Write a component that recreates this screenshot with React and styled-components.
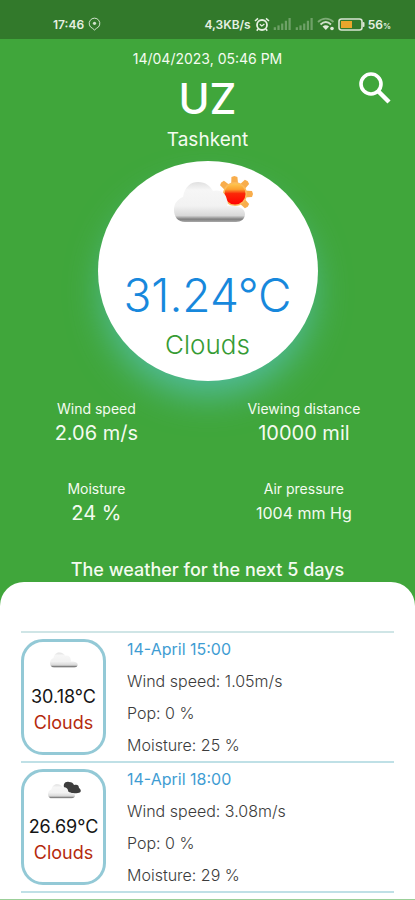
import styled, { createGlobalStyle } from "styled-components";

const GlobalStyle = createGlobalStyle`
  * {
    box-sizing: border-box;
    margin: 0;
    padding: 0;
  }
  body {
    background: #40a63b;
    font-family: Inter, "Open Sans", sans-serif;
  }
`;

const Screen = styled.div`
  min-height: 100vh;
  display: flex;
  flex-direction: column;
  border-bottom: 1px solid #9bcf98;
  background: #40a63b;
  color: #f4fbf0;
`;

const StatusBar = styled.div`
  height: 39px;
  padding: 9px 24px 0 53px;
  display: flex;
  align-items: center;
  justify-content: space-between;
  background: #32792b;
  font-size: 12px;
  font-weight: 600;
  color: #e6f0e2;
`;

const StatusGroup = styled.div`
  display: flex;
  align-items: center;
  gap: ${({ $gap }) => $gap}px;
  small {
    font-size: 8px;
  }
`;

const Header = styled.header`
  position: relative;
  padding-top: 10px;
  display: flex;
  flex-direction: column;
  align-items: center;
`;

const DateText = styled.p`
  font-size: 14px;
  line-height: 20px;
`;

const Country = styled.h1`
  font-size: 42px;
  font-weight: 500;
  line-height: 60px;
  color: white;
`;

const City = styled.p`
  font-size: 19px;
  line-height: 22px;
`;

const SearchButton = styled.button`
  position: absolute;
  top: 31px;
  right: 22px;
  width: 36px;
  height: 36px;
  border: none;
  background: none;
  cursor: pointer;
`;

const WeatherCircle = styled.section`
  width: 220px;
  height: 220px;
  margin: 10px auto 0;
  padding-top: 14px;
  display: flex;
  flex-direction: column;
  align-items: center;
  border-radius: 50%;
  background: white;
  box-shadow: 0 20px 36px -6px #52bda0;
`;

const Temperature = styled.p`
  margin-top: 40px;
  font-size: 46px;
  font-weight: 300;
  line-height: 60px;
  color: #1788dc;
`;

const Condition = styled.p`
  margin-top: 2px;
  font-size: 26px;
  font-weight: 300;
  line-height: 36px;
  color: #369b34;
`;

const Stats = styled.div`
  margin-top: 18px;
  display: flex;
  justify-content: space-around;
  text-align: center;
`;

const StatColumn = styled.dl`
  display: flex;
  flex-direction: column;
  gap: 32px;
`;

const StatLabel = styled.dt`
  font-size: 14px;
  line-height: 20px;
`;

const StatValue = styled.dd`
  font-size: ${({ $small }) => ($small ? 16 : 20)}px;
  line-height: 28px;
`;

const ForecastTitle = styled.h2`
  margin-top: 30px;
  font-size: 18px;
  font-weight: 500;
  line-height: 25px;
  text-align: center;
`;

const ForecastPanel = styled.section`
  flex: 1;
  padding: 49px 21px 0;
  border-radius: 24px 24px 0 0;
  background: white;
`;

const ForecastList = styled.ul`
  list-style: none;
  border-top: 2px solid #cfe5e6;
`;

const ForecastItem = styled.li`
  height: 130px;
  display: flex;
  align-items: flex-start;
  gap: 21px;
  padding-top: 6px;
  border-bottom: 2px solid #bfe0e6;
`;

const ForecastCard = styled.div`
  width: 85px;
  height: 116px;
  padding-top: 8px;
  display: flex;
  flex-direction: column;
  align-items: center;
  border: 3px solid #93c9d6;
  border-radius: 22px;
  font-size: 18px;
  line-height: 26px;
  white-space: nowrap;
  color: #151515;
  p {
    margin-top: 14px;
  }
  span {
    color: #b52a0c;
  }
`;

const ForecastDetails = styled.div`
  margin-top: -6px;
  font-size: 16px;
  font-weight: 300;
  line-height: 32px;
  color: #3c3c3c;
  h3 {
    font-size: 16px;
    font-weight: 400;
    color: #3f9dd3;
  }
`;

const forecast = [
  { time: "14-April 15:00", temp: "30.18°C", wind: "1.05", moisture: 25 },
  { time: "14-April 18:00", temp: "26.69°C", wind: "3.08", moisture: 29, dark: true },
];

const LocationIcon = () => (
  <svg width="13" height="14" viewBox="0 0 13 14" fill="none" stroke="#d3e4ce">
    <path d="M4.6 11.4A5.3 5.3 0 1 1 8.4 11.4L6.5 13Z" />
    <circle cx="6.5" cy="6.3" r="1.6" fill="#d3e4ce" stroke="none" />
  </svg>
);

const AlarmIcon = () => (
  <svg width="16" height="15" viewBox="0 0 16 15" fill="none" stroke="#e6f0e2">
    <circle cx="8" cy="8" r="5" strokeWidth="1.8" />
    <path d="M1 4 4 1.3M15 4 12 1.3M4 12 2.8 13.8M12 12l1.2 1.8" strokeWidth="1.6" />
    <path d="M5.8 7.2 7.8 9l2.6-2" strokeWidth="1.3" />
  </svg>
);

const SignalIcon = () => (
  <svg width="19" height="12" viewBox="0 0 19 13" fill="#6ea167">
    <rect x="0" y="10" width="2.4" height="3" />
    <rect x="4" y="8" width="2.4" height="5" />
    <rect x="8" y="6" width="2.4" height="7" />
    <rect x="12" y="3" width="2.4" height="10" />
    <rect x="16" y="0" width="2.4" height="13" />
  </svg>
);

const WifiIcon = () => (
  <svg width="18" height="14" viewBox="0 0 18 14" fill="none">
    <path d="M1 5C5.5 .5 12 .5 16.5 5" stroke="#7dab76" strokeWidth="1.8" />
    <path d="M3.5 7.5C7 4.3 10.7 4.3 14 7.5" stroke="#cfe0ca" strokeWidth="1.8" />
    <path d="M5.5 9.5 8.8 13l3.3-3.5C10 7.8 7.5 7.8 5.5 9.5Z" fill="#dfeada" />
    <circle cx="15" cy="11.5" r="1.8" fill="#dfeada" />
  </svg>
);

const BatteryIcon = () => (
  <svg width="27" height="13" viewBox="0 0 27 13">
    <rect x="1" y="1" width="23" height="11" rx="2.5" fill="none" stroke="#d9e5d4" strokeWidth="1.6" />
    <rect x="3" y="3" width="11" height="7" fill="#e9a62c" />
    <rect x="24.5" y="4" width="2" height="5" rx="1" fill="#d9e5d4" />
  </svg>
);

const SearchIcon = () => (
  <svg width="36" height="36" viewBox="0 0 36 36" fill="none" stroke="white">
    <circle cx="14" cy="14" r="10" strokeWidth="3.6" />
    <path d="M21 21 32 32" strokeWidth="4.4" />
  </svg>
);

const CLOUD =
  "M11 41C4 41 0 36 0 29c0-7 4-11 9-13C11 5 17 1 24 1c8 0 12 4 15 9 7-2 13 2 14 9 1 2 1 4 0 6 8-1 18 1 18 8 0 5-4 8-9 8Z";

const CloudGradient = ({ id }) => (
  <linearGradient id={id} x1="0" y1="0" x2="0" y2="1">
    <stop offset="0" stopColor="#e0e0e0" />
    <stop offset=".2" stopColor="#f6f6f6" />
    <stop offset=".6" stopColor="#f2f2f2" />
    <stop offset=".84" stopColor="#d8d8d8" />
    <stop offset=".93" stopColor="#808080" />
    <stop offset="1" stopColor="#a8a8a8" />
  </linearGradient>
);

const SunCloudIcon = () => (
  <svg width="90" height="50" viewBox="-10 0 90 50" role="img" aria-label="Partly cloudy">
    <defs>
      <CloudGradient id="cloud-main" />
      <linearGradient id="sun" x1="0" y1="0" x2="0" y2="1">
        <stop offset="0" stopColor="#ffc850" />
        <stop offset=".28" stopColor="#fba030" />
        <stop offset=".48" stopColor="#fb2808" />
        <stop offset="1" stopColor="#f00" />
      </linearGradient>
    </defs>
    <g transform="translate(62 19)">
      {[-140, -92, -45, 0, 45].map((angle) => (
        <path key={angle} d="M9-3.5 17-3 18 0 17 3 9 3.500Z" fill="#f8ad4c" transform={`rotate(${angle})`} />
      ))}
      <circle r="12" fill="#fbbb5c" />
      <circle r="10.5" fill="url(#sun)" />
    </g>
    <path d={CLOUD} transform="translate(1 6)" fill="url(#cloud-main)" />
  </svg>
);

const SmallCloudIcon = ({ id, dark }) => (
  <svg width="38" height="20" viewBox="0 0 38 20" role="img" aria-label="Cloudy">
    <defs>
      <CloudGradient id={id} />
    </defs>
    {dark && (
      <path
        d="M20 9c-3-4 0-8 4-7 3 0 4 1 5 3 3-1 5 0 5 3 3 2 2 5-1 5-5 1-10 0-13-4Z"
        fill="#3d3d3d"
      />
    )}
    <path
      d={CLOUD}
      transform={dark ? "translate(3 4) scale(.38 .35)" : "translate(5 2) scale(.39 .38)"}
      fill={`url(#${id})`}
    />
  </svg>
);

const Stat = ({ label, value, small }) => (
  <div>
    <StatLabel>{label}</StatLabel>
    <StatValue $small={small}>{value}</StatValue>
  </div>
);

export default function App() {
  return (
    <Screen>
      <GlobalStyle />
      <StatusBar>
        <StatusGroup $gap={4}>
          17:46
          <LocationIcon />
        </StatusGroup>
        <StatusGroup $gap={3}>
          4,3KB/s
          <AlarmIcon />
          <SignalIcon />
          <SignalIcon />
          <WifiIcon />
          <BatteryIcon />
          <span>
            56<small>%</small>
          </span>
        </StatusGroup>
      </StatusBar>
      <Header>
        <DateText>14/04/2023, 05:46 PM</DateText>
        <Country>UZ</Country>
        <City>Tashkent</City>
        <SearchButton aria-label="Search">
          <SearchIcon />
        </SearchButton>
      </Header>
      <WeatherCircle>
        <SunCloudIcon />
        <Temperature>31.24°C</Temperature>
        <Condition>Clouds</Condition>
      </WeatherCircle>
      <Stats>
        <StatColumn>
          <Stat label="Wind speed" value="2.06 m/s" />
          <Stat label="Moisture" value="24 %" />
        </StatColumn>
        <StatColumn>
          <Stat label="Viewing distance" value="10000 mil" />
          <Stat label="Air pressure" value="1004 mm Hg" small />
        </StatColumn>
      </Stats>
      <ForecastTitle>The weather for the next 5 days</ForecastTitle>
      <ForecastPanel>
        <ForecastList>
          {forecast.map((item, index) => (
            <ForecastItem key={item.time}>
              <ForecastCard>
                <SmallCloudIcon id={`cloud-${index}`} dark={item.dark} />
                <p>{item.temp}</p>
                <span>Clouds</span>
              </ForecastCard>
              <ForecastDetails>
                <h3>{item.time}</h3>
                <p>Wind speed: {item.wind}m/s</p>
                <p>Pop: 0 %</p>
                <p>Moisture: {item.moisture} %</p>
              </ForecastDetails>
            </ForecastItem>
          ))}
        </ForecastList>
      </ForecastPanel>
    </Screen>
  );
}
